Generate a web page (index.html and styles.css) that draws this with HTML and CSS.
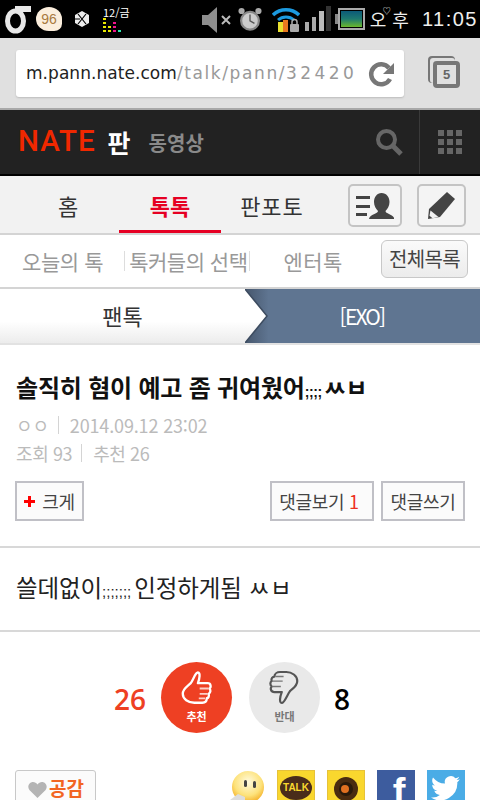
FILE: index.html
```html
<!DOCTYPE html>
<html lang="ko">
<head>
    <meta charset="UTF-8">
    <title>NATE 판</title>
    <link rel="stylesheet" href="styles.css">
</head>
<body>
    <div class="statusbar">
        <div class="status-left">
            <svg width="27" height="30" viewBox="0 0 27 30"><ellipse cx="10.500" cy="17" rx="8" ry="10" fill="none" stroke="#e8e8e8" stroke-width="5"/><path d="M10 5h16" stroke="#e8e8e8" stroke-width="6"/></svg>
            <span class="bubble">96</span>
            <svg class="ico-exo" width="16" height="18" viewBox="0 0 16 18"><path d="M8 1l7 4v8l-7 4-7-4V5z" fill="#eee"/><path d="M4 4l8 10M12 4L4 14M1 9h5" stroke="#000" stroke-width="1.200"/></svg>
            <div class="eq">
                <span class="eq-date">12/금</span>
                <svg width="20" height="15" viewBox="0 0 20 15"><g fill="#e8e800"><rect x="0" y="0" width="3" height="2"/><rect x="0" y="4" width="3" height="2"/><rect x="0" y="8" width="3" height="2"/><rect x="0" y="12" width="3" height="2"/><rect x="5" y="8" width="3" height="2"/><rect x="5" y="12" width="3" height="2"/></g><g fill="#f0148c"><rect x="10" y="4" width="3" height="2"/><rect x="10" y="8" width="3" height="2"/><rect x="10" y="12" width="3" height="2"/></g><rect x="15" y="12" width="3" height="2" fill="#30e8b0"/></svg>
            </div>
        </div>
        <div class="status-right">
            <svg width="30" height="28" viewBox="0 0 30 28"><path d="M0 10h6l9-8v26l-9-8H0z" fill="#8e8e8e"/><path d="M20 11l8 8M28 11l-8 8" stroke="#bbb" stroke-width="2"/></svg>
            <svg class="ico-alarm" width="24" height="26" viewBox="0 0 27 28"><circle cx="13.500" cy="16" r="10" fill="#ccc" stroke="#888" stroke-width="2.500"/><path d="M13.500 9v7l5 3" fill="none" stroke="#555" stroke-width="1.500"/><circle cx="4" cy="5" r="3.500" fill="#aaa"/><circle cx="23" cy="5" r="3.500" fill="#aaa"/></svg>
            <svg class="ico-wifi" width="28" height="26" viewBox="0 0 28 26"><path d="M1 9a19 19 0 0 1 26 0" fill="none" stroke="#1c9ae0" stroke-width="3.500"/><path d="M6 14a12 12 0 0 1 16 0" fill="none" stroke="#1c9ae0" stroke-width="3"/><rect x="6" y="16" width="5" height="10" fill="#e8e030"/><rect x="11" y="14" width="5" height="12" fill="#e87820"/><rect x="18" y="18" width="9" height="8" rx="1" fill="#aaa"/><path d="M20 18v-2a2.500 2.500 0 0 1 5 0v2" fill="none" stroke="#aaa" stroke-width="1.500"/></svg>
            <svg class="ico-signal" width="26" height="26" viewBox="0 0 26 26"><rect x="0" y="16" width="4" height="9" fill="#aaa"/><rect x="7" y="11" width="4" height="14" fill="#aaa"/><rect x="14" y="5" width="5" height="20" fill="#bbb"/><rect x="21" y="0" width="5" height="25" fill="#333"/></svg>
            <svg class="ico-batt" width="30" height="22" viewBox="0 0 30 22"><rect x="0" y="6" width="3" height="10" fill="#888"/><rect x="4" y="1" width="25" height="20" fill="none" stroke="#aaa" stroke-width="2"/><defs><linearGradient id="batt" x1="0" y1="0" x2="0" y2="1"><stop offset="0" stop-color="#0c5a78"/><stop offset=".5" stop-color="#1e7a70"/><stop offset="1" stop-color="#6ab82c"/></linearGradient></defs><rect x="6" y="3" width="21" height="16" fill="url(#batt)"/></svg>
            <span class="status-ampm">오후</span>
            <span class="status-time">11:05</span>
        </div>
    </div>

    <div class="urlbar">
        <div class="urlbox">
            <span class="url-text"><span class="url-host">m.pann.nate.com</span>/talk/pann/<span class="url-num">32420</span></span>
            <svg width="28" height="28" viewBox="0 0 28 28"><path d="M22 19a10 10 0 1 1-1-11" fill="none" stroke="#777" stroke-width="4.500"/><path d="M26 3v11H15z" fill="#777"/></svg>
        </div>
        <div class="tabcount"><span class="tabcount-num">5</span></div>
    </div>

    <div class="header">
        <span class="logo">NATE</span>
        <span class="logo-pan">판</span>
        <span class="logo-sub">동영상</span>
        <svg class="ico-search" width="28" height="28" viewBox="0 0 28 28"><circle cx="11.500" cy="11.500" r="8.500" fill="none" stroke="#666" stroke-width="4"/><path d="M18 18l8 8" stroke="#666" stroke-width="5"/></svg>
        <div class="header-grid">
            <svg width="24" height="24" viewBox="0 0 24 24"><g fill="#666"><rect x="0" y="0" width="6" height="6"/><rect x="9" y="0" width="6" height="6"/><rect x="18" y="0" width="6" height="6"/><rect x="0" y="9" width="6" height="6"/><rect x="9" y="9" width="6" height="6"/><rect x="18" y="9" width="6" height="6"/><rect x="0" y="18" width="6" height="6"/><rect x="9" y="18" width="6" height="6"/><rect x="18" y="18" width="6" height="6"/></g></svg>
        </div>
    </div>

    <div class="tabs">
        <a class="tab">홈</a>
        <a class="tab active">톡톡</a>
        <a class="tab tab-photo">판포토</a>
        <button class="icon-btn btn-user">
            <svg width="38" height="26" viewBox="0 0 38 26"><g fill="#444"><rect x="0" y="3" width="14" height="3"/><rect x="0" y="12" width="14" height="3"/><rect x="0" y="20" width="11" height="3"/><path d="M25.500 0c5 0 8 4 8 9 0 4-2 7-4 9 0 3 8 3 9 8H13c1-5 9-5 9-8-2-2-4-5-4-9 0-5 3-9 7.500-9z"/></g></svg>
        </button>
        <button class="icon-btn btn-write">
            <svg width="28" height="28" viewBox="0 0 28 28"><path d="M19 0l8 7-15 18-12 2 1-10z" fill="#444"/><path d="M2.500 18.500l8 6.500-6 1.200-3-2.500z" fill="#f0f0f0"/></svg>
        </button>
    </div>

    <div class="subnav">
        <a class="sub-item sub-today">오늘의 톡</a>
        <a class="sub-item sub-choice">톡커들의 선택</a>
        <a class="sub-item sub-enter">엔터톡</a>
        <button class="sub-all">전체목록</button>
    </div>

    <div class="crumbs">
        <div class="crumb-home">팬톡</div>
        <svg class="crumb-arrow" width="24" height="54" viewBox="0 0 24 54"><defs><linearGradient id="arrowfill" x1="0" y1="0" x2="0" y2="1"><stop offset=".6" stop-color="#fff"/><stop offset="1" stop-color="#ececec"/></linearGradient></defs><path d="M0 0L22 27 0 54z" fill="url(#arrowfill)"/><path d="M0 0L22 27 0 54" fill="none" stroke="#3d4c60" stroke-width="1.500"/></svg>
        <div class="crumb-cat">[EXO]</div>
    </div>

    <div class="post-head">
        <h1 class="post-title">솔직히 혐이 예고 좀 귀여웠어<span class="semi">;;;;</span>ㅆㅂ</h1>
        <div class="post-meta">ㅇㅇ<i class="sep"></i>2014.09.12 23:02</div>
        <div class="post-meta post-stats">조회 93<i class="sep"></i>추천 26</div>
        <div class="post-tools">
            <button class="tool-btn btn-big"><span class="plus"></span>크게</button>
            <button class="tool-btn btn-view">댓글보기 <em>1</em></button>
            <button class="tool-btn btn-reply">댓글쓰기</button>
        </div>
    </div>

    <div class="post-body">쓸데없이<span class="semi">;;;;;;;</span>인정하게됨 ㅆㅂ</div>

    <div class="votes">
        <span class="vote-num up">26</span>
        <div class="vote-circle vote-up">
            <svg width="32" height="37" viewBox="0 0 36 40"><path d="M19 2c3 0 2 7 0 12h11c4 0 4 5 2 6 2 2 1 5-1 6 1 2 0 5-2 5 0 3-2 5-5 5h-9C8 36 2 32 2 26c0-6 5-8 9-12 3-4 5-12 8-12z" fill="none" stroke="#fff" stroke-width="2.600" stroke-linejoin="round"/><path d="M21 20h10M21 26h9M20 31h7" stroke="#fbd0c8" stroke-width="2"/></svg>
            <span class="vote-label">추천</span>
        </div>
        <div class="vote-circle vote-down">
            <svg width="31" height="35" viewBox="0 0 34 38"><path d="M14 36c-3 0-2-7 0-12H6c-4 0-5-4-3-6-2-2-2-5 0-6-1-3 1-5 3-5 0-3 3-5 6-5h7c6 0 12 4 12 10 0 6-5 8-8 11-3 4-6 13-9 13z" fill="none" stroke="#555" stroke-width="2.400" stroke-linejoin="round"/><path d="M4 12h11M4 18h9M7 7h9" stroke="#777" stroke-width="1.600"/></svg>
            <span class="vote-label">반대</span>
        </div>
        <span class="vote-num down">8</span>
    </div>

    <div class="share-row">
        <button class="like-btn">
            <svg width="21" height="18" viewBox="0 0 22 20"><path d="M11 19L2 10C-1 6 2 1 6 1c2 0 4 1 5 3 1-2 3-3 5-3 4 0 7 5 4 9z" fill="#b4b4b4"/></svg>
            <span>공감</span>
        </button>
        <div class="share-icons">
            <svg class="share-smile" width="34" height="30" viewBox="0 0 34 30"><defs><radialGradient id="smile" cx=".5" cy=".35" r=".7"><stop offset="0" stop-color="#fffbe0"/><stop offset=".6" stop-color="#fde27a"/><stop offset="1" stop-color="#f2a414"/></radialGradient></defs><circle cx="18" cy="17" r="16" fill="url(#smile)"/><rect x="14" y="10" width="3" height="7" rx="1.500" fill="#444"/><rect x="23" y="11" width="3" height="7" rx="1.500" fill="#444"/><path d="M0 30l8-6 7 3v3z" fill="#ddd"/></svg>
            <div class="share-box box-kakao"><span class="talk-bubble">TALK</span></div>
            <div class="share-box box-story">
                <svg width="26" height="26" viewBox="0 0 26 26"><circle cx="13" cy="13" r="12" fill="#4a2c10"/><circle cx="13" cy="13" r="7" fill="#2a1a0a"/><circle cx="12" cy="13" r="4" fill="#e07020"/></svg>
            </div>
            <div class="share-box box-fb"><span class="fb-f">f</span></div>
            <div class="share-box box-tw">
                <svg width="30" height="26" viewBox="0 0 30 26"><path d="M29 4c-1 .6-2 1-3.500 1 1.200-.8 2.200-2 2.700-3.300-1.200.7-2.500 1.200-3.800 1.500A6 6 0 0 0 14 8.600C9 8.400 5 6 2 2.400c-1.600 2.800-.8 6.300 1.900 8-1 0-1.900-.3-2.700-.7 0 3 2 5.500 4.800 6-.9.3-1.800.3-2.700.1.800 2.400 3 4.100 5.600 4.200A12 12 0 0 1 0 22.500 17 17 0 0 0 26.300 7.300c1.100-.8 2-1.900 2.700-3.300z" fill="#fff"/></svg>
            </div>
        </div>
    </div>
</body>
</html>
```
FILE: styles.css
```css
* {
    box-sizing: border-box;
}
html, body {
    margin: 0;
    height: 800px;
    overflow: hidden;
}
body {
    font-family: "Noto Sans CJK KR", "Noto Sans", sans-serif;
    background-color: #fff;
    color: #333;
}
button {
    font-family: inherit;
    padding: 0;
    cursor: pointer;
}

/* status bar */
.statusbar {
    height: 38px;
    background-color: #000;
    display: flex;
    justify-content: space-between;
    align-items: center;
    padding: 0 2px 0 5px;
    color: #eee;
}
.status-left, .status-right {
    display: flex;
    align-items: center;
}
.bubble {
    width: 26px;
    height: 24px;
    margin-left: 4px;
    border-radius: 50% 50% 30% 50%;
    background-color: #fbeedd;
    color: #a87a40;
    font: 14px/24px "Liberation Sans", sans-serif;
    text-align: center;
}
.ico-exo {
    margin-left: 12px;
}
.eq {
    margin-left: 13px;
    display: flex;
    flex-direction: column;
    width: 26px;
}
.eq-date {
    font-size: 11px;
    line-height: 12px;
    color: #fff;
    white-space: nowrap;
}
.ico-alarm {
    margin-left: 6px;
}
.ico-wifi {
    margin-left: 10px;
}
.ico-signal {
    margin-left: 5px;
}
.ico-batt {
    margin-left: 4px;
}
.status-ampm {
    font-size: 18px;
    line-height: 24px;
    letter-spacing: 6px;
    margin-left: 5px;
    position: relative;
}
.status-ampm::after {
    content: "♡";
    position: absolute;
    left: 13px;
    top: 0;
    font-size: 8px;
    line-height: 8px;
    letter-spacing: 0;
}
.status-time {
    font: 20px/24px "Liberation Sans", sans-serif;
    letter-spacing: 1.500px;
    margin-left: 7px;
}

/* url bar */
.urlbar {
    height: 72px;
    background-color: #e0e0e0;
    border-bottom: 2px solid #a8a8a8;
    display: flex;
    padding: 12px 0 0 16px;
}
.urlbox {
    width: 388px;
    height: 47px;
    background-color: #fff;
    border-radius: 3px;
    box-shadow: 0 1px 2px #bbb;
    display: flex;
    align-items: center;
    justify-content: space-between;
    padding: 0 8px 0 10px;
}
.url-text {
    width: 332px;
    overflow: hidden;
    white-space: nowrap;
    font: 17px/47px "DejaVu Sans", sans-serif;
    letter-spacing: 1.600px;
    color: #999;
}
.url-host {
    color: #222;
    letter-spacing: .05px;
}
.url-num {
    letter-spacing: 3.400px;
}
.tabcount {
    width: 27px;
    height: 27px;
    margin: 11px 0 0 29px;
    border: 4px solid #777;
    border-radius: 4px;
    box-shadow: -4px -4px 0 -1px #e0e0e0, -5px -5px 0 0 #777;
    text-align: center;
}
.tabcount-num {
    display: block;
    font: bold 13px/20px "Liberation Sans", sans-serif;
    color: #666;
}

/* nate header */
.header {
    height: 66px;
    background-color: #222;
    border-bottom: 2px solid #000;
    display: flex;
    align-items: center;
    padding-left: 18px;
}
.logo {
    font: 500 29.500px/1 Roboto, sans-serif;
    letter-spacing: 1px;
    color: #f02800;
}
.logo-pan {
    font-size: 25px;
    font-weight: 700;
    color: #fff;
    margin-left: 12px;
}
.logo-sub {
    font-size: 20px;
    font-weight: 700;
    color: #8a8a8a;
    margin-left: 18px;
}
.ico-search {
    margin-left: auto;
}
.header-grid {
    width: 61px;
    height: 64px;
    margin-left: 16px;
    border-left: 1px solid #3a3a3a;
    display: flex;
    align-items: center;
    justify-content: center;
}

/* main tabs */
.tabs {
    height: 59px;
    background-color: #f2f2f2;
    border-bottom: 2px solid #d4d4d4;
    display: flex;
    padding-left: 17px;
}
.tab {
    width: 102px;
    height: 57px;
    text-align: center;
    font-size: 22px;
    line-height: 58px;
    color: #333;
}
.tab.active {
    color: #e60023;
    font-weight: 700;
    border-bottom: 3px solid #e60023;
}
.tab-photo {
    letter-spacing: 1px;
}
.icon-btn {
    height: 43px;
    margin-top: 8px;
    border: 2px solid #c4c4c4;
    border-radius: 5px;
    background-color: #f4f4f4;
    display: flex;
    align-items: center;
    justify-content: center;
}
.btn-user {
    width: 54px;
    margin-left: 25px;
}
.btn-write {
    width: 49px;
    margin-left: 15px;
}

/* sub nav */
.subnav {
    height: 54px;
    background-color: #fff;
    border-bottom: 2px solid #d4d4d4;
    display: flex;
    align-items: center;
    font-size: 21px;
    color: #999;
}
.sub-item {
    white-space: nowrap;
    letter-spacing: -.4px;
}
.sub-today {
    margin-left: 22px;
}
.sub-choice {
    margin-left: 21px;
    padding: 0 2px 0 4px;
    border-left: 1px solid #ddd;
    border-right: 1px solid #ddd;
    line-height: 20px;
    letter-spacing: -.5px;
}
.sub-enter {
    margin-left: 33px;
    letter-spacing: .5px;
}
.sub-all {
    width: 87px;
    height: 38px;
    margin-left: auto;
    margin-right: 12px;
    margin-bottom: 5px;
    border: 1px solid #c8c8c8;
    border-radius: 6px;
    background: linear-gradient(#fafafa, #ececec);
    font-size: 20px;
    letter-spacing: -.6px;
    color: #444;
}

/* breadcrumb */
.crumbs {
    height: 56px;
    display: flex;
    border-bottom: 2px solid #e2e2e2;
    position: relative;
}
.crumb-home {
    width: 245px;
    background: linear-gradient(#fff 60%, #ececec);
    text-align: center;
    font-size: 22px;
    line-height: 52px;
    color: #333;
}
.crumb-cat {
    flex: 1;
    background: linear-gradient(90deg, #46566c, #5f7591 10%);
    text-align: center;
    font-size: 21px;
    line-height: 54px;
    letter-spacing: -1.800px;
    color: #fff;
    padding-right: 1px;
}
.crumb-arrow {
    position: absolute;
    left: 245px;
    top: 0;
}

/* post */
.post-head {
    height: 203px;
    padding: 25px 15px 0 16px;
    border-bottom: 2px solid #d8d8d8;
}
.post-title {
    margin: 0;
    font-size: 24px;
    line-height: 34px;
    font-weight: 700;
    letter-spacing: -.2px;
    color: #111;
    white-space: nowrap;
}
.post-title .semi {
    font: bold 14px/1 "Liberation Sans", sans-serif;
    letter-spacing: -.4px;
    margin-right: 2px;
}
.post-meta {
    margin-top: 8px;
    font-size: 18px;
    line-height: 26px;
    color: #bbb;
    display: flex;
    align-items: center;
    letter-spacing: -.15px;
}
.post-stats {
    margin-top: 2px;
    letter-spacing: -.4px;
}
.sep {
    width: 1px;
    height: 18px;
    margin: 0 11px 0 9px;
    background-color: #d4d4d4;
}
.post-tools {
    margin-top: 15px;
    display: flex;
}
.tool-btn {
    height: 40px;
    border: 2px solid #c0c0c6;
    background-color: #fbfbfb;
    font-size: 18px;
    letter-spacing: -.3px;
    color: #444;
}
.tool-btn em {
    font-style: normal;
    color: #ee3020;
}
.btn-big {
    width: 69px;
    display: flex;
    align-items: center;
    justify-content: center;
    margin-left: -1px;
}
.plus {
    width: 11px;
    height: 11px;
    margin-right: 7px;
    background: linear-gradient(#f00, #f00) center/100% 3px no-repeat, linear-gradient(#f00, #f00) center/3px 100% no-repeat;
}
.btn-view {
    width: 104px;
    margin-left: auto;
    padding-right: 6px;
}
.btn-reply {
    width: 84px;
    margin-left: 7px;
}
.post-body {
    height: 84px;
    border-bottom: 2px solid #d8d8d8;
    padding-left: 16px;
    font-size: 23.500px;
    line-height: 78px;
    letter-spacing: -.1px;
    color: #222;
}
.post-body .semi {
    font: 15px/1 "Liberation Sans", sans-serif;
    letter-spacing: 0;
    margin-right: 3px;
}

/* votes */
.votes {
    height: 138px;
    display: flex;
    align-items: flex-start;
    padding: 30px 0 0 114px;
}
.vote-num {
    font: 600 28px/74px "Open Sans", sans-serif;
}
.vote-num.up {
    color: #ee4023;
    width: 47px;
}
.vote-num.down {
    color: #000;
    margin-left: 14px;
}
.vote-circle {
    width: 71px;
    height: 71px;
    border-radius: 50%;
    display: flex;
    flex-direction: column;
    align-items: center;
    padding-top: 8px;
}
.vote-up {
    background-color: #ee4023;
}
.vote-down {
    background-color: #e9e9e9;
    margin-left: 17px;
}
.vote-label {
    font-size: 11px;
    line-height: 14px;
    font-weight: 700;
}
.vote-up .vote-label {
    color: #fff;
    margin-top: 2px;
}
.vote-down .vote-label {
    color: #777;
    margin-top: 4px;
}

/* share row */
.share-row {
    display: flex;
    justify-content: space-between;
    padding: 0 15px;
}
.like-btn {
    width: 81px;
    height: 40px;
    border: 1px solid #c8c8c8;
    border-radius: 3px;
    background-color: #fbfbfb;
    display: flex;
    align-items: flex-start;
    justify-content: center;
    padding-top: 3px;
    gap: 1px;
    font-size: 19px;
    line-height: 22px;
    font-weight: 700;
    color: #f26522;
}
.like-btn svg {
    margin-top: 7px;
}
.like-btn span {
    margin-top: 3px;
}
.share-icons {
    display: flex;
    gap: 12px;
}
.share-smile {
    margin-right: 1px;
}
.share-box {
    width: 38px;
    height: 40px;
    display: flex;
    align-items: flex-start;
    justify-content: center;
    padding-top: 5px;
    overflow: hidden;
}
.box-kakao, .box-story {
    background-color: #f9d72e;
    border: 1px solid #e6c23a;
}
.talk-bubble {
    width: 32px;
    height: 24px;
    border-radius: 50%;
    background-color: #4a2c1a;
    color: #f9d72e;
    font: bold 10px/24px "Liberation Sans", sans-serif;
    text-align: center;
}
.box-fb {
    background-color: #3d5c9e;
    padding-top: 0;
}
.fb-f {
    font: bold 38px/44px "Liberation Sans", sans-serif;
    color: #fff;
    margin-left: 6px;
}
.box-tw {
    background-color: #4aace6;
}
```
